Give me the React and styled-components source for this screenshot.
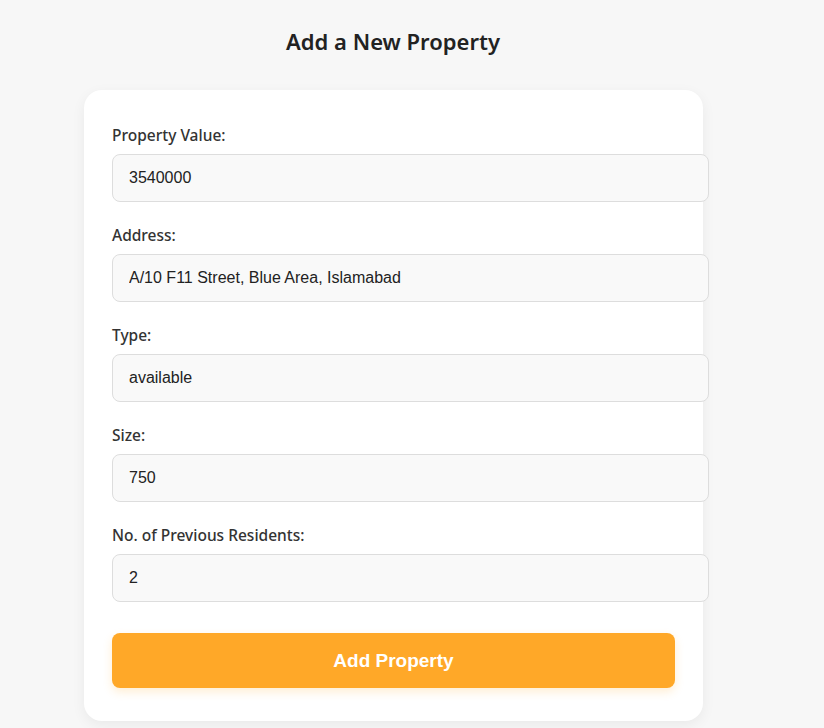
import React from 'react';
import styled, { createGlobalStyle } from 'styled-components';

const GlobalStyle = createGlobalStyle`
  * { box-sizing: content-box; }
  body {
    margin: 0;
    background: #f7f7f7;
    font-family: "Noto Sans", "Open Sans", sans-serif;
    color: #333;
  }
`;

const fields = [
  { label: 'Property Value:', value: '3540000' },
  { label: 'Address:', value: 'A/10 F11 Street, Blue Area, Islamabad' },
  { label: 'Type:', value: 'available' },
  { label: 'Size:', value: '750' },
  { label: 'No. of Previous Residents:', value: '2' },
];

const App = () => {
  return (
    <Page>
      <GlobalStyle />
      <Title>Add a New Property</Title>
      <Card onSubmit={e => e.preventDefault()}>
        {fields.map(f => (
          <Group key={f.label}>
            <Label>{f.label}</Label>
            <Input defaultValue={f.value} />
          </Group>
        ))}
        <Button type="submit">Add Property</Button>
      </Card>
    </Page>
  );
};

const Page = styled.div`
  width: 824px;
  min-height: 728px;
  display: flex;
  flex-direction: column;
  align-items: center;
`;

const Title = styled.h2`
  margin: 26px 0 0;
  height: 30px;
  line-height: 30px;
  font-size: 22px;
  font-weight: 600;
  color: #222;
  transform: translateX(-19px);
`;

const Card = styled.form`
  width: 563px;
  margin: 34px 0 0 -37px;
  padding: 34px 28px 33px;
  background: #fff;
  border-radius: 18px;
  box-shadow: 0 4px 14px rgba(0, 0, 0, 0.06);
  display: flex;
  flex-direction: column;
`;

const Group = styled.div`
  display: flex;
  flex-direction: column;
  margin-bottom: 22px;
`;

const Label = styled.label`
  height: 22px;
  line-height: 22px;
  font-size: 15.5px;
  font-weight: 500;
  color: #333;
  margin-bottom: 8px;
`;

const Input = styled.input`
  width: 100%;
  height: 46px;
  padding: 0 16px;
  border: 1px solid #ddd;
  border-radius: 8px;
  background: #f9f9f9;
  font-family: "Liberation Sans", Arial, sans-serif;
  font-size: 16px;
  color: #222;
  outline: none;
`;

const Button = styled.button`
  margin-top: 9px;
  height: 53px;
  border: none;
  border-radius: 8px;
  background: #ffa828;
  color: #fff;
  font-family: "Liberation Sans", Arial, sans-serif;
  font-size: 19px;
  font-weight: 700;
  box-shadow: 0 4px 10px rgba(255, 168, 40, 0.2);
  cursor: pointer;
`;

export default App;
